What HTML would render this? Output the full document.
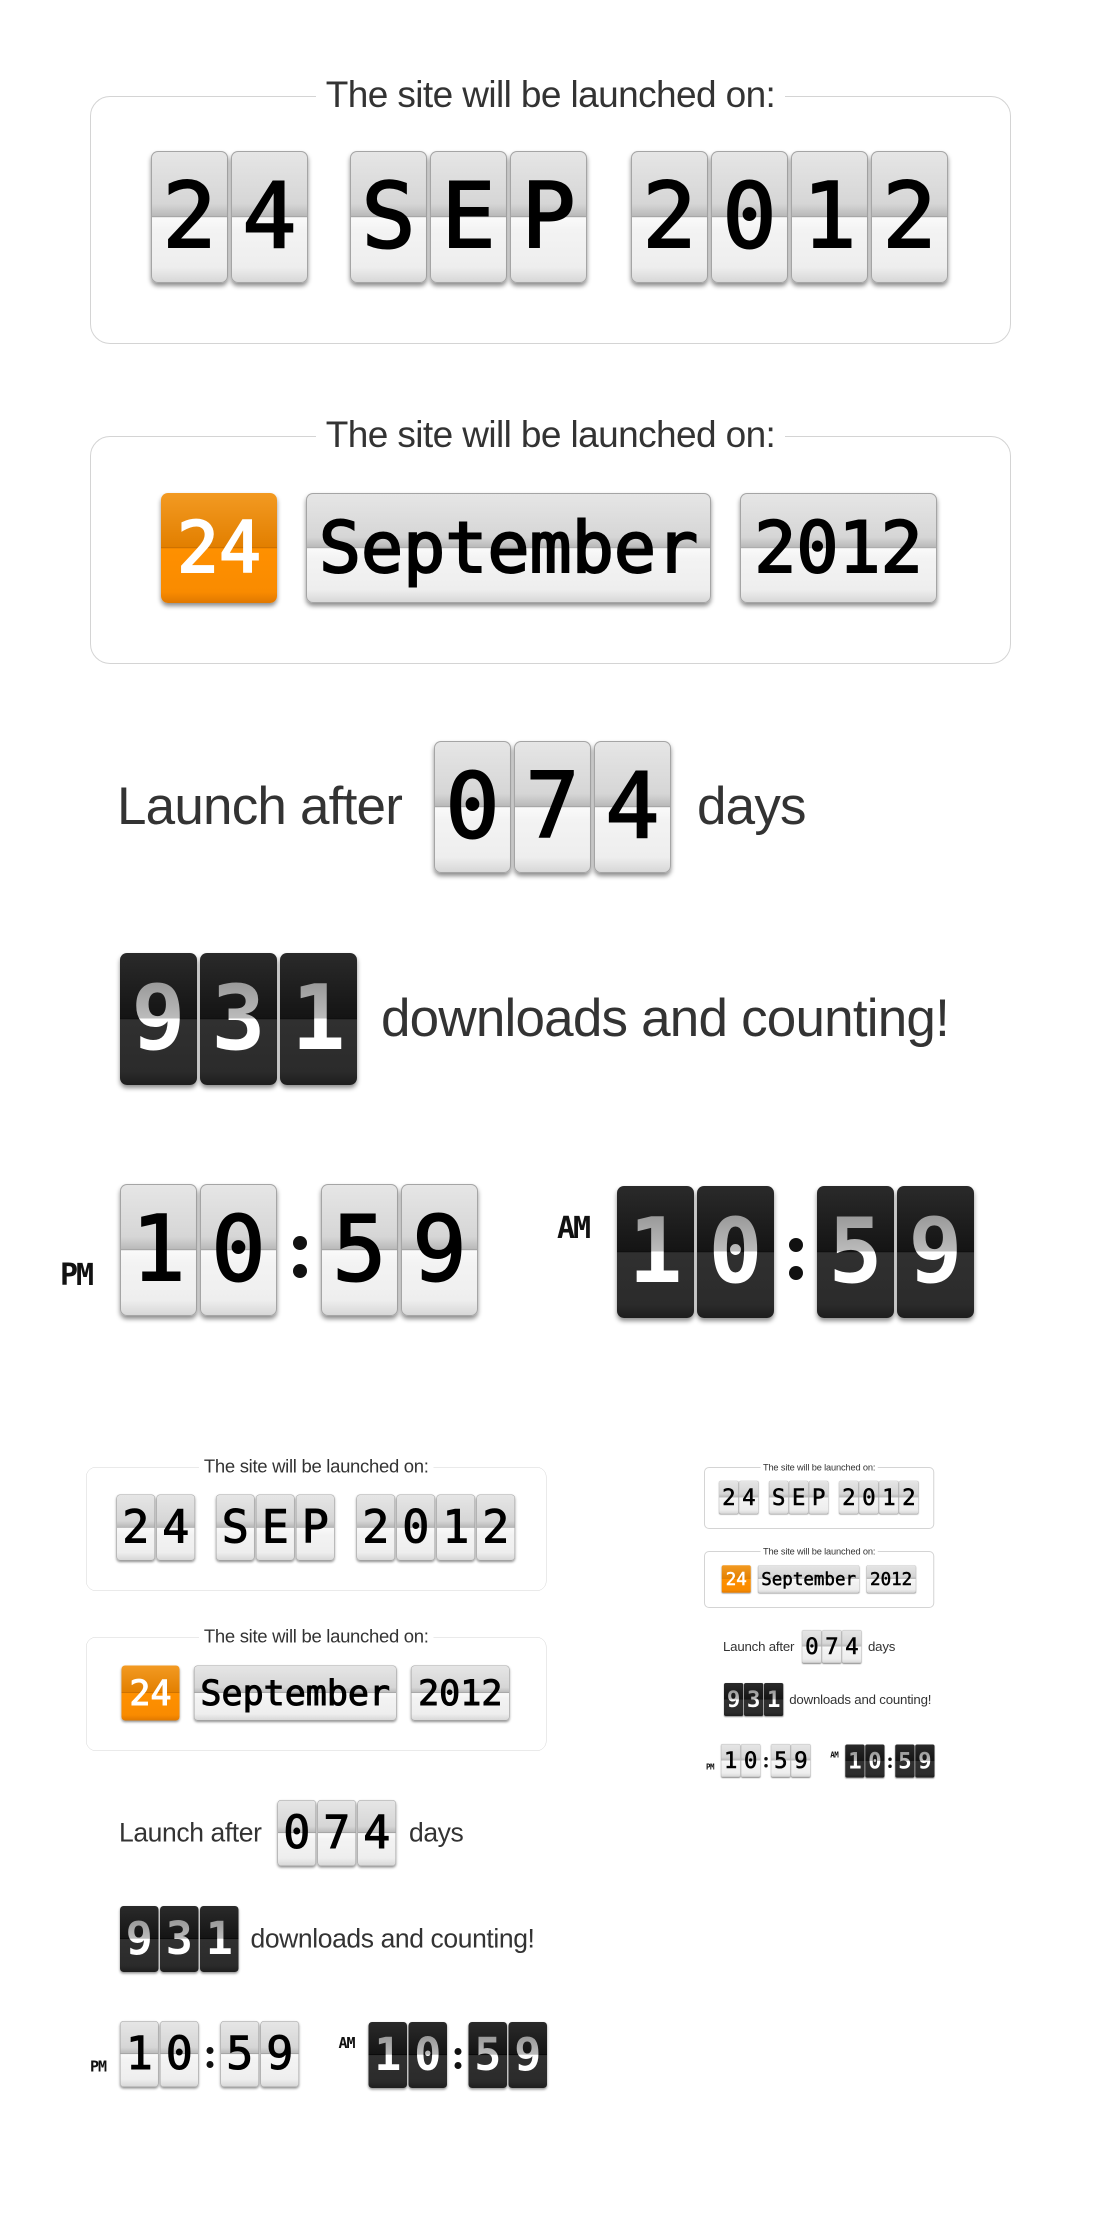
<!DOCTYPE html>
<html><head><meta charset="utf-8"><style>
html,body{margin:0;padding:0;background:#fff;}
body{width:1100px;height:2240px;position:relative;overflow:hidden;font-family:"Liberation Sans",sans-serif;}
.g{position:absolute;transform-origin:0 0;}
.box{position:absolute;border:1.5px solid #d4d4d4;border-radius:20px;box-sizing:border-box;}
.ttl{position:absolute;top:-24px;left:0;width:100%;text-align:center;font-size:37px;color:#333;line-height:44px;}
.ttl span{background:#fff;padding:0 10px;letter-spacing:-0.6px;}
.c{position:absolute;top:0;width:77px;height:132px;border-radius:7px;box-sizing:border-box;text-align:center;
 font-family:"DejaVu Sans Mono","Liberation Mono",monospace;font-weight:normal;-webkit-text-stroke:2px currentColor;font-size:90px;line-height:132px;color:#000;
 background:linear-gradient(#e6e6e6 0%,#d6d6d6 40%,#b9b9b9 49.3%,#8f8f8f 49.6%,#fafafa 50.5%,#f3f3f3 60%,#eeeeee 88%,#d6d6d6 100%);
 box-shadow:0 3px 5px rgba(0,0,0,.45),inset 0 0 0 1px #a5a5a5;}
.d{background:linear-gradient(#2a2a2a 0%,#141414 49.5%,#000 49.6%,#303030 50.5%,#2b2b2b 90%,#1e1e1e 100%);box-shadow:0 3px 5px rgba(0,0,0,.45);-webkit-text-stroke:0;}
.d span{background:linear-gradient(#8a8a8a 0%,#bbbbbb 49.5%,#fff 50.5%,#fff 100%);-webkit-background-clip:text;background-clip:text;color:transparent;-webkit-text-stroke:0;font-weight:bold;}
.o{background:linear-gradient(#f39a22 0%,#e27f00 49.3%,#b05e00 49.6%,#ff9000 50.5%,#f98b00 90%,#e07800 100%);color:#fff;box-shadow:0 3px 5px rgba(0,0,0,.45);}
.txt{position:absolute;top:0;height:132px;line-height:132px;font-size:53px;color:#333;white-space:nowrap;letter-spacing:-0.8px;}
.lab{position:absolute;font-family:"DejaVu Sans Mono",monospace;font-weight:bold;font-size:30px;color:#111;line-height:30px;letter-spacing:-2px;}
.dot{position:absolute;width:14px;height:14px;border-radius:50%;background:#111;}
</style></head><body>

<!-- G1 -->
<div class="g" style="left:90px;top:96px;">
 <div class="box" style="left:0;top:0;width:921px;height:248px;"><div class="ttl"><span>The site will be launched on:</span></div></div>
 <div style="position:absolute;top:55px;left:0;">
  <div class="c" style="left:61px">2</div><div class="c" style="left:141px">4</div>
  <div class="c" style="left:260px">S</div><div class="c" style="left:340px">E</div><div class="c" style="left:420px">P</div>
  <div class="c" style="left:541px">2</div><div class="c" style="left:621px">0</div><div class="c" style="left:701px">1</div><div class="c" style="left:781px">2</div>
 </div>
</div>
<div class="g" style="left:86px;top:1467px;transform:scale(.5);">
 <div class="box" style="left:0;top:0;width:921px;height:248px;"><div class="ttl"><span>The site will be launched on:</span></div></div>
 <div style="position:absolute;top:55px;left:0;">
  <div class="c" style="left:61px">2</div><div class="c" style="left:141px">4</div>
  <div class="c" style="left:260px">S</div><div class="c" style="left:340px">E</div><div class="c" style="left:420px">P</div>
  <div class="c" style="left:541px">2</div><div class="c" style="left:621px">0</div><div class="c" style="left:701px">1</div><div class="c" style="left:781px">2</div>
 </div>
</div>
<div class="g" style="left:704px;top:1467px;transform:scale(.25);">
 <div class="box" style="left:0;top:0;width:921px;height:248px;border-width:4px;"><div class="ttl"><span>The site will be launched on:</span></div></div>
 <div style="position:absolute;top:55px;left:0;">
  <div class="c" style="left:61px">2</div><div class="c" style="left:141px">4</div>
  <div class="c" style="left:260px">S</div><div class="c" style="left:340px">E</div><div class="c" style="left:420px">P</div>
  <div class="c" style="left:541px">2</div><div class="c" style="left:621px">0</div><div class="c" style="left:701px">1</div><div class="c" style="left:781px">2</div>
 </div>
</div>

<!-- G2 -->
<div class="g" style="left:90px;top:436px;">
 <div class="box" style="left:0;top:0;width:921px;height:228px;"><div class="ttl"><span>The site will be launched on:</span></div></div>
 <div class="c o" style="left:71px;top:57px;width:116px;height:110px;line-height:110px;font-size:70px;">24</div>
 <div class="c" style="left:216px;top:57px;width:405px;height:110px;line-height:110px;font-size:70px;">September</div>
 <div class="c" style="left:650px;top:57px;width:197px;height:110px;line-height:110px;font-size:70px;">2012</div>
</div>
<div class="g" style="left:86px;top:1637px;transform:scale(.5);">
 <div class="box" style="left:0;top:0;width:921px;height:228px;"><div class="ttl"><span>The site will be launched on:</span></div></div>
 <div class="c o" style="left:71px;top:57px;width:116px;height:110px;line-height:110px;font-size:70px;">24</div>
 <div class="c" style="left:216px;top:57px;width:405px;height:110px;line-height:110px;font-size:70px;">September</div>
 <div class="c" style="left:650px;top:57px;width:197px;height:110px;line-height:110px;font-size:70px;">2012</div>
</div>
<div class="g" style="left:704px;top:1551px;transform:scale(.25);">
 <div class="box" style="left:0;top:0;width:921px;height:228px;border-width:4px;"><div class="ttl"><span>The site will be launched on:</span></div></div>
 <div class="c o" style="left:71px;top:57px;width:116px;height:110px;line-height:110px;font-size:70px;">24</div>
 <div class="c" style="left:216px;top:57px;width:405px;height:110px;line-height:110px;font-size:70px;">September</div>
 <div class="c" style="left:650px;top:57px;width:197px;height:110px;line-height:110px;font-size:70px;">2012</div>
</div>

<!-- G3 -->
<div class="g" style="left:117px;top:741px;">
 <div class="txt" style="left:0">Launch after</div>
 <div class="c" style="left:317px">0</div><div class="c" style="left:397px">7</div><div class="c" style="left:477px">4</div>
 <div class="txt" style="left:580px">days</div>
</div>
<div class="g" style="left:119px;top:1800px;transform:scale(.5);">
 <div class="txt" style="left:0">Launch after</div>
 <div class="c" style="left:317px">0</div><div class="c" style="left:397px">7</div><div class="c" style="left:477px">4</div>
 <div class="txt" style="left:580px">days</div>
</div>
<div class="g" style="left:723px;top:1630px;transform:scale(.25);">
 <div class="txt" style="left:0">Launch after</div>
 <div class="c" style="left:317px">0</div><div class="c" style="left:397px">7</div><div class="c" style="left:477px">4</div>
 <div class="txt" style="left:580px">days</div>
</div>

<!-- G4 -->
<div class="g" style="left:120px;top:953px;">
 <div class="c d" style="left:0"><span>9</span></div><div class="c d" style="left:80px"><span>3</span></div><div class="c d" style="left:160px"><span>1</span></div>
 <div class="txt" style="left:261px">downloads and counting!</div>
</div>
<div class="g" style="left:120px;top:1906px;transform:scale(.5);">
 <div class="c d" style="left:0"><span>9</span></div><div class="c d" style="left:80px"><span>3</span></div><div class="c d" style="left:160px"><span>1</span></div>
 <div class="txt" style="left:261px">downloads and counting!</div>
</div>
<div class="g" style="left:724px;top:1683px;transform:scale(.25);">
 <div class="c d" style="left:0"><span>9</span></div><div class="c d" style="left:80px"><span>3</span></div><div class="c d" style="left:160px"><span>1</span></div>
 <div class="txt" style="left:261px">downloads and counting!</div>
</div>

<!-- G5 -->
<div class="g" style="left:60px;top:1184px;">
 <div class="lab" style="left:0;top:77px">PM</div>
 <div class="c" style="left:60px">1</div><div class="c" style="left:140px">0</div>
 <div class="dot" style="left:233px;top:52px"></div><div class="dot" style="left:233px;top:80px"></div>
 <div class="c" style="left:261px">5</div><div class="c" style="left:341px">9</div>
 <div class="lab" style="left:497px;top:30px">AM</div>
 <div class="c d" style="left:557px;top:2px"><span>1</span></div><div class="c d" style="left:637px;top:2px"><span>0</span></div>
 <div class="dot" style="left:729px;top:54px"></div><div class="dot" style="left:729px;top:82px"></div>
 <div class="c d" style="left:757px;top:2px"><span>5</span></div><div class="c d" style="left:837px;top:2px"><span>9</span></div>
</div>
<div class="g" style="left:90px;top:2021px;transform:scale(.5);">
 <div class="lab" style="left:0;top:77px">PM</div>
 <div class="c" style="left:60px">1</div><div class="c" style="left:140px">0</div>
 <div class="dot" style="left:233px;top:52px"></div><div class="dot" style="left:233px;top:80px"></div>
 <div class="c" style="left:261px">5</div><div class="c" style="left:341px">9</div>
 <div class="lab" style="left:497px;top:30px">AM</div>
 <div class="c d" style="left:557px;top:2px"><span>1</span></div><div class="c d" style="left:637px;top:2px"><span>0</span></div>
 <div class="dot" style="left:729px;top:54px"></div><div class="dot" style="left:729px;top:82px"></div>
 <div class="c d" style="left:757px;top:2px"><span>5</span></div><div class="c d" style="left:837px;top:2px"><span>9</span></div>
</div>
<div class="g" style="left:706px;top:1744px;transform:scale(.25);">
 <div class="lab" style="left:0;top:77px">PM</div>
 <div class="c" style="left:60px">1</div><div class="c" style="left:140px">0</div>
 <div class="dot" style="left:233px;top:52px"></div><div class="dot" style="left:233px;top:80px"></div>
 <div class="c" style="left:261px">5</div><div class="c" style="left:341px">9</div>
 <div class="lab" style="left:497px;top:30px">AM</div>
 <div class="c d" style="left:557px;top:2px"><span>1</span></div><div class="c d" style="left:637px;top:2px"><span>0</span></div>
 <div class="dot" style="left:729px;top:54px"></div><div class="dot" style="left:729px;top:82px"></div>
 <div class="c d" style="left:757px;top:2px"><span>5</span></div><div class="c d" style="left:837px;top:2px"><span>9</span></div>
</div>

</body></html>
